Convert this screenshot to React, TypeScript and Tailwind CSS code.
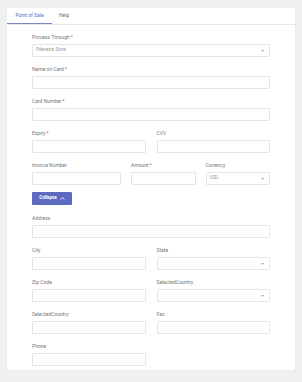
import React from 'react';

const Label: React.FC<{ text: string; required?: boolean }> = ({ text, required }) => (
  <div className="h-[6px] leading-[6px] mb-[4px] text-[5px] text-[#777] whitespace-nowrap">
    {text}
    {required && <span className="text-[#e53935] ml-[1px]">*</span>}
  </div>
);

const Input: React.FC = () => (
  <div className="h-[13px] bg-white border border-[#e3e5e8] rounded-[1px]" />
);

const Select: React.FC<{ value?: string }> = ({ value }) => (
  <div className="h-[13px] bg-white border border-[#e3e5e8] rounded-[1px] flex items-center justify-between pl-[3px] pr-[5px]">
    <span className="text-[4.5px] text-[#999]">{value}</span>
    <svg width="3" height="2" viewBox="0 0 3 2">
      <path d="M0 0 L3 0 L1.5 2 Z" fill="#aaa" />
    </svg>
  </div>
);

const Field: React.FC<{ label: string; required?: boolean; select?: boolean; value?: string; className?: string }> = ({
  label,
  required,
  select,
  value,
  className,
}) => (
  <div className={className}>
    <Label text={label} required={required} />
    {select ? <Select value={value} /> : <Input />}
  </div>
);

export default function App() {
  return (
    <div className="w-[302px] h-[382px] bg-[#eef0f2] pt-[7px] px-[6px] font-['Roboto',sans-serif]">
      <div className="bg-white h-[364px] border border-[#e9ebee]">
        <div className="flex h-[17px] border-b border-[#e6e8eb] text-[5px]">
          <div className="w-[45px] flex items-center justify-center text-[#5c6bc0] border-b border-[#7986cb]">
            Point of Sale
          </div>
          <div className="px-[7px] flex items-center text-[#666]">Help</div>
        </div>

        <div className="px-[25px] pt-[9px] flex flex-col gap-[9px]">
          <Field label="Process Through" required select value="Pdevezia Store" />
          <Field label="Name on Card" required />
          <Field label="Card Number" required />
          <div className="grid grid-cols-2 gap-x-[11px]">
            <Field label="Expiry" required />
            <Field label="CVV" />
          </div>
          <div className="grid grid-cols-[89px_1fr_1fr] gap-x-[10px]">
            <Field label="Invoice Number" />
            <Field label="Amount" required />
            <Field label="Currency" select value="USD" />
          </div>
          <div className="-mt-[2px] mb-[1px]">
            <button className="h-[13px] w-[40px] bg-[#5c6bc0] rounded-[1px] text-white text-[4.5px] font-bold flex items-center justify-center gap-[3px]">
              Collapse
              <svg width="5" height="3" viewBox="0 0 5 3">
                <path d="M0.6 2.5 L2.5 0.6 L4.4 2.5" fill="none" stroke="white" strokeWidth="0.9" />
              </svg>
            </button>
          </div>
          <Field label="Address" />
          <div className="grid grid-cols-2 gap-x-[11px] gap-y-[9px]">
            <Field label="City" />
            <Field label="State" select />
            <Field label="Zip Code" />
            <Field label="SelectedCountry" select />
            <Field label="SelectedCountry" />
            <Field label="Fax" />
            <Field label="Phone" />
          </div>
        </div>
      </div>
    </div>
  );
}
